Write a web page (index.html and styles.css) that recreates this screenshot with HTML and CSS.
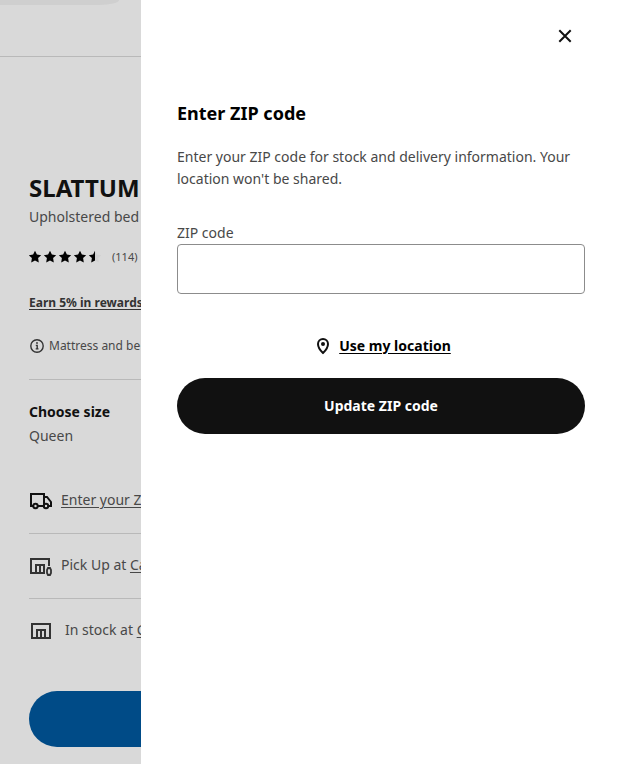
FILE: index.html
```html
<!DOCTYPE html>
<html lang="en">
<head>
    <meta charset="UTF-8">
    <meta name="viewport" content="width=device-width, initial-scale=1.0">
    <title>SLATTUM - Enter ZIP code</title>
    <link rel="stylesheet" href="styles.css">
</head>
<body>
    <main class="product">
        <div class="product-header">
            <div class="search-bar"></div>
        </div>
        <div class="product-info">
            <h1 class="product-name">SLATTUM</h1>
            <p class="product-type">Upholstered bed</p>

            <div class="rating">
                <svg class="stars" width="75" height="14" viewBox="0 0 75 14" aria-label="4.5 out of 5">
                    <defs>
                        <path id="star" d="M6 .8 7.9 4.6 12.2 5.2 9.1 8.1 9.8 12.5 6 10.5 2.2 12.5 2.9 8.1 -.2 5.2 4.1 4.6Z"/>
                    </defs>
                    <use href="#star"/>
                    <use href="#star" x="15"/>
                    <use href="#star" x="30"/>
                    <use href="#star" x="45"/>
                    <use href="#star" x="60" fill="#d0d0d0"/>
                    <path d="M66 .8V10.5L62.2 12.5 62.9 8.1 59.8 5.2 64.1 4.6Z"/>
                </svg>
                <span class="rating-count">(114)</span>
            </div>

            <a class="rewards" href="#">Earn 5% in rewards</a>

            <div class="notice">
                <svg width="16" height="16" viewBox="0 0 16 16" fill="none" stroke="#333" stroke-width="1.4">
                    <circle cx="8" cy="8" r="6.2"/>
                    <path d="M6.8 7.4h1.4v3.3M6.7 10.9h2.8"/>
                    <circle cx="8" cy="5" r=".9" fill="#333" stroke="none"/>
                </svg>
                <span>Mattress and be</span>
            </div>

            <div class="size">
                <h2 class="size-title">Choose size</h2>
                <p class="size-value">Queen</p>
            </div>

            <ul class="stock-list">
                <li>
                    <svg width="24" height="24" viewBox="0 0 24 24" fill="none" stroke="#111" stroke-width="2">
                        <path d="M4 18H2V6h13v12H9M15 9h3l4 5v4h-2M15 18h-1"/>
                        <circle cx="6.5" cy="18" r="2.2"/>
                        <circle cx="17" cy="18" r="2.2"/>
                    </svg>
                    <a href="#">Enter your Z</a>
                </li>
                <li>
                    <svg width="24" height="24" viewBox="0 0 24 24" fill="none" stroke="#333" stroke-width="2">
                        <path d="M16 20H2V6h18v7"/>
                        <path d="M7 20v-8h8v8M11 12v8"/>
                        <path d="M19 15h2l1 2v3l-1 2h-2l-1-2v-3z" stroke-width="1.8"/>
                    </svg>
                    <span>Pick Up at <a href="#">Ca</a></span>
                </li>
                <li>
                    <svg width="24" height="24" viewBox="0 0 24 24" fill="none" stroke="#333" stroke-width="2">
                        <path d="M3 6h18v14H3z"/>
                        <path d="M8 20v-8h8v8M12 12v8"/>
                    </svg>
                    <span class="in-stock">In stock at <a href="#">C</a></span>
                </li>
            </ul>

            <button type="button" class="buy-button" aria-label="Add to bag"></button>
        </div>
    </main>

    <aside class="drawer">
        <div class="drawer-header">
            <button type="button" class="close-button" aria-label="Close">
                <svg width="24" height="24" viewBox="0 0 24 24" fill="none" stroke="#111" stroke-width="2">
                    <path d="M6.3 6.3 17.7 17.7M17.7 6.3 6.3 17.7"/>
                </svg>
            </button>
        </div>
        <form class="zip-form">
            <h2 class="zip-title">Enter ZIP code</h2>
            <p class="zip-text">Enter your ZIP code for stock and delivery information. Your location won't be shared.</p>
            <label for="zip">ZIP code</label>
            <input type="text" id="zip" name="zip">
            <button type="button" class="location-button">
                <svg width="24" height="24" viewBox="0 0 24 24" fill="none" stroke="#111" stroke-width="2">
                    <path d="M12 19C9.2 16.4 7 13.6 7 10a5 5 0 0 1 10 0c0 3.6-2.2 6.4-5 9Z"/>
                    <circle cx="12" cy="10" r="2" fill="#111" stroke="none"/>
                </svg>
                <span>Use my location</span>
            </button>
            <button type="submit" class="update-button">Update ZIP code</button>
        </form>
    </aside>
</body>
</html>
```
FILE: styles.css
```css
* {
    box-sizing: border-box;
}
body {
    display: flex;
    min-height: 100vh;
    margin: 0;
    font-family: "Noto Sans", sans-serif;
    font-size: 14px;
    line-height: 22px;
    color: #484848;
    background-color: #fff;
}
h1, h2, p, ul {
    margin: 0;
    padding: 0;
}
a {
    color: inherit;
    text-underline-offset: 2px;
}
button {
    padding: 0;
    border: none;
    font: inherit;
    cursor: pointer;
}
svg {
    flex: none;
}

/* dimmed page behind the drawer */
.product {
    flex: 1;
    min-width: 0;
    overflow: hidden;
    white-space: nowrap;
    background-color: #d9d9d9;
}
.product-header {
    height: 57px;
    border-bottom: 1px solid #b9b9b9;
}
.search-bar {
    height: 5px;
    margin-right: 22px;
    background-color: #cfcfcf;
    border-bottom-right-radius: 20px 5px;
}
.product-info {
    padding: 115px 0 16px 29px;
}
.product-name {
    font-size: 24px;
    line-height: 32px;
    color: #111;
}
.product-type {
    margin-top: 2px;
}
.rating {
    display: flex;
    align-items: center;
    gap: 8px;
    height: 20px;
    margin-top: 19px;
    font-size: 11px;
}
.stars {
    fill: #000;
}
.rewards {
    display: block;
    margin-top: 25px;
    font-size: 12px;
    font-weight: bold;
    color: #333;
}
.notice {
    display: flex;
    align-items: center;
    gap: 4px;
    margin-top: 21px;
    padding-bottom: 22px;
    border-bottom: 1px solid #b9b9b9;
    font-size: 12px;
}
.size {
    padding: 21px 0 22px;
}
.size-title {
    font-size: 14px;
    color: #111;
}
.size-value {
    margin-top: 2px;
}
.stock-list {
    list-style: none;
}
.stock-list li {
    display: flex;
    align-items: center;
    gap: 8px;
    height: 65px;
    padding-bottom: 2px;
    border-bottom: 1px solid #b9b9b9;
}
.stock-list li:last-child {
    border-bottom-color: transparent;
}
.in-stock {
    padding-left: 4px;
}
.buy-button {
    display: block;
    width: 320px;
    height: 56px;
    margin-top: 27px;
    border-radius: 28px;
    background-color: #004b87;
}

.drawer {
    width: 480px;
    padding: 0 36px;
    background-color: #fff;
}
.drawer-header {
    display: flex;
    justify-content: flex-end;
    padding: 16px 0;
}
.close-button {
    display: flex;
    align-items: center;
    justify-content: center;
    width: 40px;
    height: 40px;
    background: none;
}
.zip-form {
    display: flex;
    flex-direction: column;
    padding-top: 28px;
}
.zip-title {
    font-size: 18px;
    line-height: 26px;
    color: #000;
}
.zip-text {
    margin: 20px 0 32px;
}
#zip {
    width: 100%;
    height: 50px;
    padding: 0 12px;
    border: 1px solid #8c8c8c;
    border-radius: 4px;
    font: inherit;
}
.location-button {
    display: flex;
    align-items: center;
    align-self: center;
    gap: 4px;
    margin: 40px 0 20px;
    font-weight: bold;
    color: #000;
    background: none;
}
.location-button span {
    text-decoration: underline;
    text-underline-offset: 2px;
}
.update-button {
    height: 56px;
    border-radius: 28px;
    font-weight: bold;
    color: #fff;
    background-color: #111;
}
```
